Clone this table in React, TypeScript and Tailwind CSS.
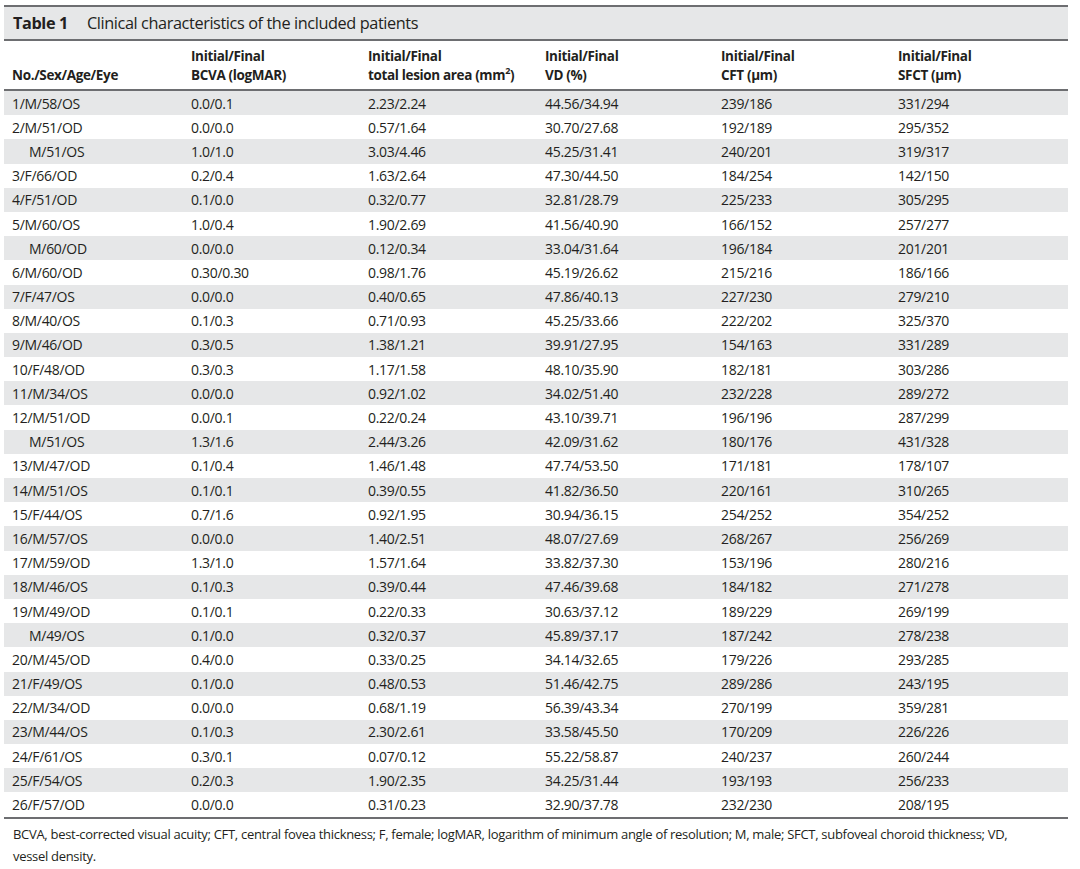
const rows: [string, string, string, string, string, string, boolean?][] = [
  ['1/M/58/OS', '0.0/0.1', '2.23/2.24', '44.56/34.94', '239/186', '331/294'],
  ['2/M/51/OD', '0.0/0.0', '0.57/1.64', '30.70/27.68', '192/189', '295/352'],
  ['M/51/OS', '1.0/1.0', '3.03/4.46', '45.25/31.41', '240/201', '319/317', true],
  ['3/F/66/OD', '0.2/0.4', '1.63/2.64', '47.30/44.50', '184/254', '142/150'],
  ['4/F/51/OD', '0.1/0.0', '0.32/0.77', '32.81/28.79', '225/233', '305/295'],
  ['5/M/60/OS', '1.0/0.4', '1.90/2.69', '41.56/40.90', '166/152', '257/277'],
  ['M/60/OD', '0.0/0.0', '0.12/0.34', '33.04/31.64', '196/184', '201/201', true],
  ['6/M/60/OD', '0.30/0.30', '0.98/1.76', '45.19/26.62', '215/216', '186/166'],
  ['7/F/47/OS', '0.0/0.0', '0.40/0.65', '47.86/40.13', '227/230', '279/210'],
  ['8/M/40/OS', '0.1/0.3', '0.71/0.93', '45.25/33.66', '222/202', '325/370'],
  ['9/M/46/OD', '0.3/0.5', '1.38/1.21', '39.91/27.95', '154/163', '331/289'],
  ['10/F/48/OD', '0.3/0.3', '1.17/1.58', '48.10/35.90', '182/181', '303/286'],
  ['11/M/34/OS', '0.0/0.0', '0.92/1.02', '34.02/51.40', '232/228', '289/272'],
  ['12/M/51/OD', '0.0/0.1', '0.22/0.24', '43.10/39.71', '196/196', '287/299'],
  ['M/51/OS', '1.3/1.6', '2.44/3.26', '42.09/31.62', '180/176', '431/328', true],
  ['13/M/47/OD', '0.1/0.4', '1.46/1.48', '47.74/53.50', '171/181', '178/107'],
  ['14/M/51/OS', '0.1/0.1', '0.39/0.55', '41.82/36.50', '220/161', '310/265'],
  ['15/F/44/OS', '0.7/1.6', '0.92/1.95', '30.94/36.15', '254/252', '354/252'],
  ['16/M/57/OS', '0.0/0.0', '1.40/2.51', '48.07/27.69', '268/267', '256/269'],
  ['17/M/59/OD', '1.3/1.0', '1.57/1.64', '33.82/37.30', '153/196', '280/216'],
  ['18/M/46/OS', '0.1/0.3', '0.39/0.44', '47.46/39.68', '184/182', '271/278'],
  ['19/M/49/OD', '0.1/0.1', '0.22/0.33', '30.63/37.12', '189/229', '269/199'],
  ['M/49/OS', '0.1/0.0', '0.32/0.37', '45.89/37.17', '187/242', '278/238', true],
  ['20/M/45/OD', '0.4/0.0', '0.33/0.25', '34.14/32.65', '179/226', '293/285'],
  ['21/F/49/OS', '0.1/0.0', '0.48/0.53', '51.46/42.75', '289/286', '243/195'],
  ['22/M/34/OD', '0.0/0.0', '0.68/1.19', '56.39/43.34', '270/199', '359/281'],
  ['23/M/44/OS', '0.1/0.3', '2.30/2.61', '33.58/45.50', '170/209', '226/226'],
  ['24/F/61/OS', '0.3/0.1', '0.07/0.12', '55.22/58.87', '240/237', '260/244'],
  ['25/F/54/OS', '0.2/0.3', '1.90/2.35', '34.25/31.44', '193/193', '256/233'],
  ['26/F/57/OD', '0.0/0.0', '0.31/0.23', '32.90/37.78', '232/230', '208/195'],
]

const cols = 'grid grid-cols-[179px_177px_177px_176px_177px_1fr] pl-[8px]'

export default function App() {
  return (
    <div className="w-[1080px] h-[869px] bg-white pt-[5px] pl-[4px] text-[#231f20] font-['Open_Sans',sans-serif]">
      <div className="w-[1064px]">
        {/* Caption */}
        <div className="border-t-2 border-b-2 border-[#6d6e71] bg-[#e6e7e8] h-[36px] flex items-center pl-[9px] text-[16.3px] tracking-[-0.4px] leading-none">
          <span className="font-bold">Table 1</span>
          <span className="ml-[19px] font-medium">Clinical characteristics of the included patients</span>
        </div>

        {/* Header */}
        <div className={`${cols} border-b-2 border-[#6d6e71] h-[50px] items-end pb-[4px] text-[13.5px] font-bold leading-[19px] tracking-[-0.35px]`}>
          <div>No./Sex/Age/Eye</div>
          <div>Initial/Final<br />BCVA (logMAR)</div>
          <div>Initial/Final<br />total lesion area (mm<sup className="text-[9px] -top-[0.7em]">2</sup>)</div>
          <div>Initial/Final<br />VD (%)</div>
          <div>Initial/Final<br />CFT (μm)</div>
          <div>Initial/Final<br />SFCT (μm)</div>
        </div>

        {/* Body */}
        <div className="border-b-2 border-[#6d6e71]">
          {rows.map((r, i) => (
            <div key={i} className={`${cols} h-[24.2px] items-center text-[14px] font-medium tracking-[-0.3px] ${i % 2 === 0 ? 'bg-[#e6e7e8]' : 'bg-white'}`}>
              <div className={r[6] ? 'pl-[17px]' : ''}>{r[0]}</div>
              <div>{r[1]}</div>
              <div>{r[2]}</div>
              <div>{r[3]}</div>
              <div>{r[4]}</div>
              <div>{r[5]}</div>
            </div>
          ))}
        </div>

        {/* Footnote */}
        <p className="pl-[9px] pt-[4px] pr-[30px] text-[13px] font-medium leading-[22px] tracking-[-0.3px]">
          BCVA, best-corrected visual acuity; CFT, central fovea thickness; F, female; logMAR, logarithm of minimum angle of resolution; M, male; SFCT, subfoveal choroid thickness; VD, vessel density.
        </p>
      </div>
    </div>
  )
}
